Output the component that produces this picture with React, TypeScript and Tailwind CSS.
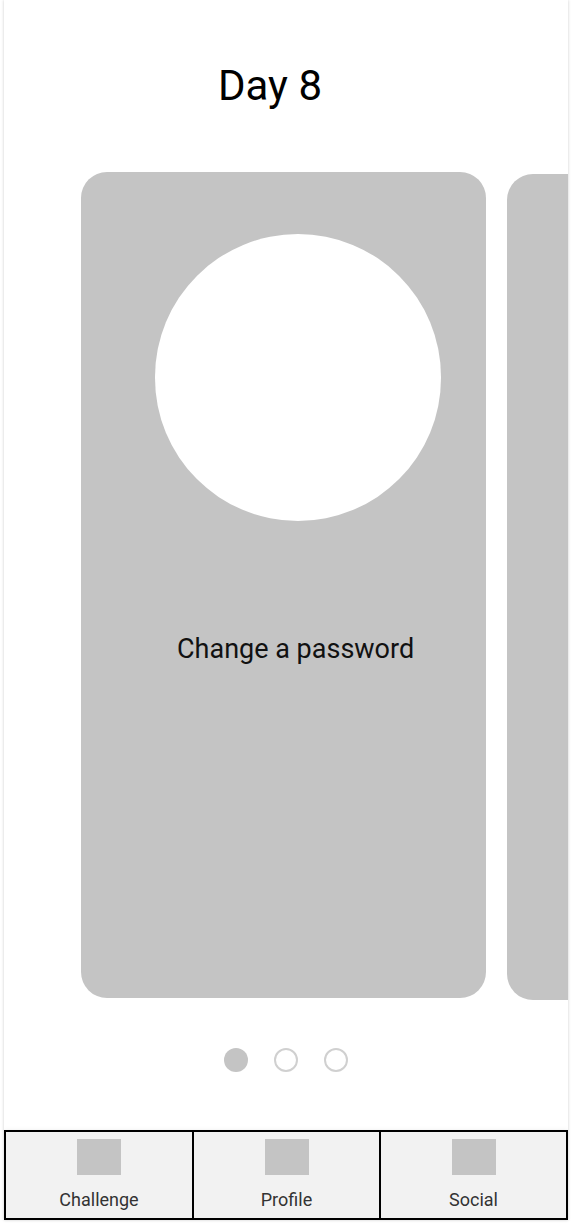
const tabs = ["Challenge", "Profile", "Social"];

function Card({ title }: { title?: string }) {
  return (
    <div className="w-[405px] h-[826px] shrink-0 rounded-[26px] bg-[#c4c4c4] pt-[62px] pl-[74px]">
      <div className="w-[286px] h-[287px] rounded-full bg-white" />
      {title && (
        <p className="mt-[112px] ml-[22px] text-[27px] leading-[32px] text-[#111]">
          {title}
        </p>
      )}
    </div>
  );
}

export default function App() {
  return (
    <div
      className="w-[572px] h-[1229px] bg-white"
      style={{ fontFamily: "Roboto, 'Liberation Sans', sans-serif" }}
    >
      <div className="ml-[4px] w-[564px] h-[1220px] flex flex-col bg-white shadow-[0_0_3px_rgba(0,0,0,0.2)] overflow-hidden">
        <h1 className="pt-[61px] pl-[214px] text-[42px] leading-[49px] text-black">Day 8</h1>

        {/* carousel */}
        <div className="mt-[62px] flex items-start gap-[21px] pl-[77px]">
          <Card title="Change a password" />
          <div className="mt-[2px]">
            <Card />
          </div>
        </div>

        <div className="mt-[48px] flex justify-center gap-[26px]">
          <span className="w-[24px] h-[24px] rounded-full bg-[#c4c4c4]" />
          <span className="w-[24px] h-[24px] rounded-full border-2 border-[#d0d0d0] bg-white" />
          <span className="w-[24px] h-[24px] rounded-full border-2 border-[#d0d0d0] bg-white" />
        </div>

        {/* bottom nav */}
        <nav className="mt-auto grid grid-cols-[186px_187px_1fr] h-[90px] border-2 border-black bg-[#f2f2f2] shadow-[0_3px_6px_rgba(0,0,0,0.25)]">
          {tabs.map((t, i) => (
            <div
              key={t}
              className={`flex flex-col items-center pt-[7px] ${i > 0 ? "border-l-2 border-black" : ""}`}
            >
              <div className="w-[44px] h-[36px] bg-[#c4c4c4]" />
              <span className="mt-[14px] text-[18px] leading-[21px] text-[#333]">{t}</span>
            </div>
          ))}
        </nav>
      </div>
    </div>
  );
}
